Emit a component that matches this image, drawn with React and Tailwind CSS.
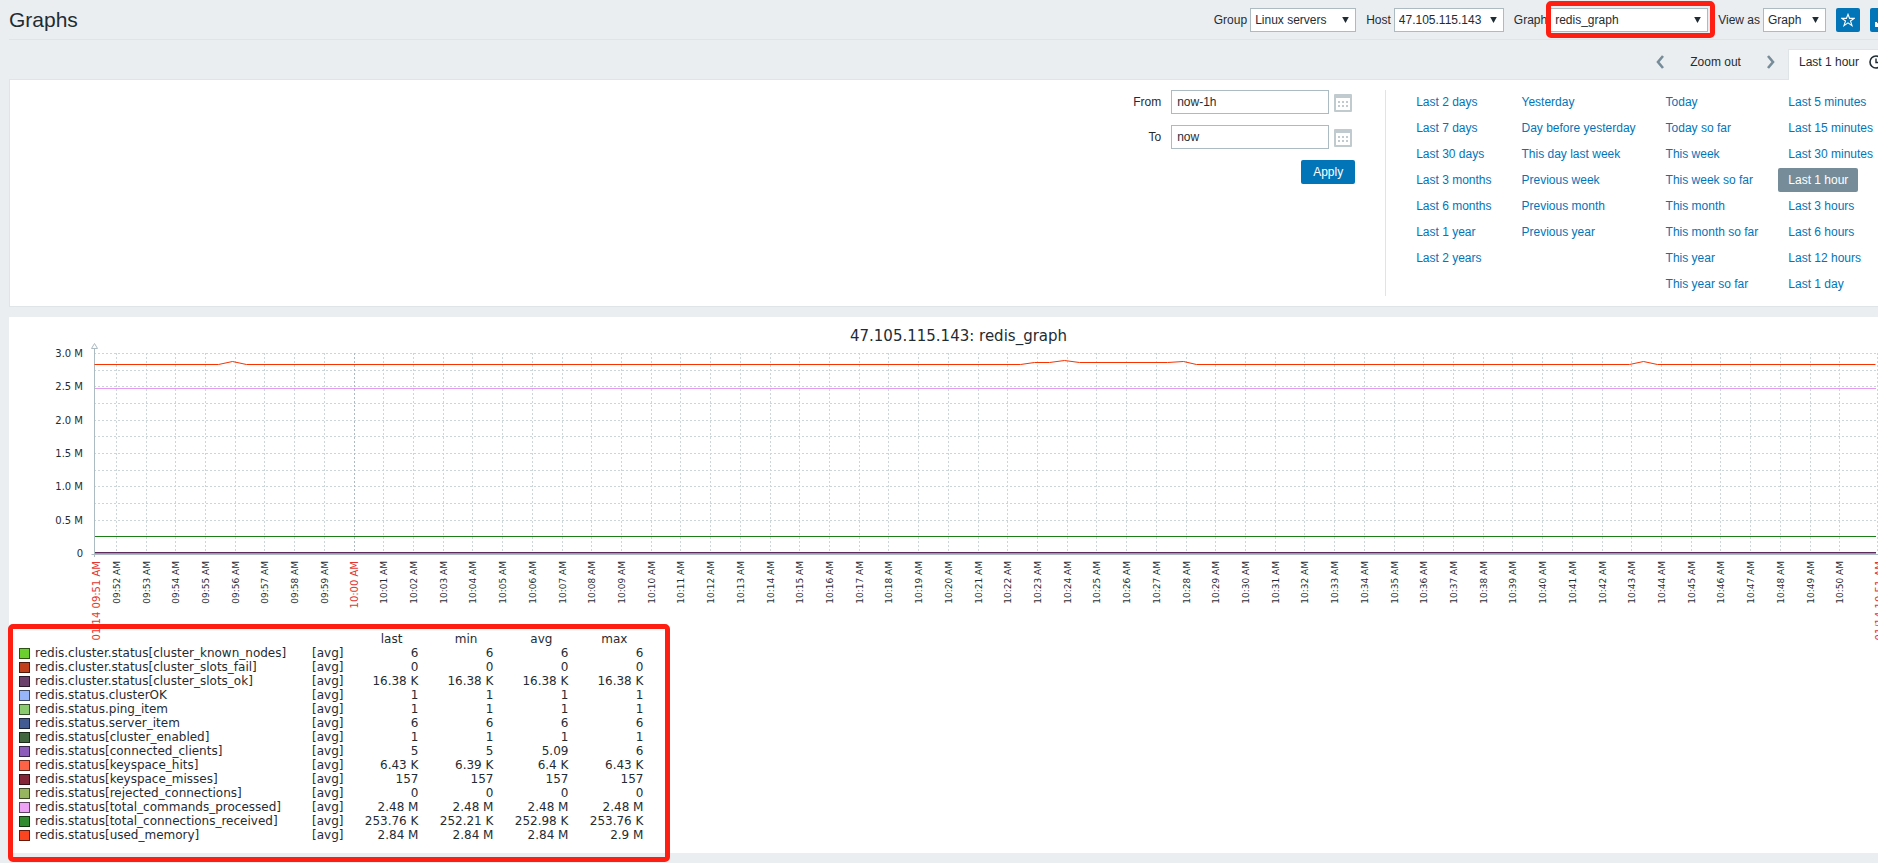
import React, { useLayoutEffect, useRef, useState } from "react";

const RANGES = [
  [
    "Last 2 days",
    "Last 7 days",
    "Last 30 days",
    "Last 3 months",
    "Last 6 months",
    "Last 1 year",
    "Last 2 years",
  ],
  [
    "Yesterday",
    "Day before yesterday",
    "This day last week",
    "Previous week",
    "Previous month",
    "Previous year",
  ],
  [
    "Today",
    "Today so far",
    "This week",
    "This week so far",
    "This month",
    "This month so far",
    "This year",
    "This year so far",
  ],
  [
    "Last 5 minutes",
    "Last 15 minutes",
    "Last 30 minutes",
    "Last 1 hour",
    "Last 3 hours",
    "Last 6 hours",
    "Last 12 hours",
    "Last 1 day",
  ],
];

const ITEMS = [
  { name: "redis.cluster.status[cluster_known_nodes]", color: "bg-[#6bd02f]", values: ["6", "6", "6", "6"] },
  { name: "redis.cluster.status[cluster_slots_fail]", color: "bg-[#c1401c]", values: ["0", "0", "0", "0"] },
  { name: "redis.cluster.status[cluster_slots_ok]", color: "bg-[#6b416b]", values: ["16.38 K", "16.38 K", "16.38 K", "16.38 K"] },
  { name: "redis.status.clusterOK", color: "bg-[#97b3fa]", values: ["1", "1", "1", "1"] },
  { name: "redis.status.ping_item", color: "bg-[#8cca70]", values: ["1", "1", "1", "1"] },
  { name: "redis.status.server_item", color: "bg-[#425b93]", values: ["6", "6", "6", "6"] },
  { name: "redis.status[cluster_enabled]", color: "bg-[#41653f]", values: ["1", "1", "1", "1"] },
  { name: "redis.status[connected_clients]", color: "bg-[#8d5cbb]", values: ["5", "5", "5.09", "6"] },
  { name: "redis.status[keyspace_hits]", color: "bg-[#fe6347]", values: ["6.43 K", "6.39 K", "6.4 K", "6.43 K"] },
  { name: "redis.status[keyspace_misses]", color: "bg-[#822638]", values: ["157", "157", "157", "157"] },
  { name: "redis.status[rejected_connections]", color: "bg-[#97b45f]", values: ["0", "0", "0", "0"] },
  { name: "redis.status[total_commands_processed]", color: "bg-[#eda2f6]", values: ["2.48 M", "2.48 M", "2.48 M", "2.48 M"] },
  { name: "redis.status[total_connections_received]", color: "bg-[#328b2e]", values: ["253.76 K", "252.21 K", "252.98 K", "253.76 K"] },
  { name: "redis.status[used_memory]", color: "bg-[#fa4520]", values: ["2.84 M", "2.84 M", "2.84 M", "2.9 M"] },
];

// [seconds from the start of the period, value in millions]
const SERIES = [
  { color: "#8fae57", points: [[0, 0], [3597, 0]] },
  { color: "#5c2a5c", points: [[0, 0.0164], [3597, 0.0164]] },
  { color: "#1a7f16", points: [[0, 0.253], [3597, 0.253]] },
  { color: "#e59bf0", points: [[0, 2.48], [3597, 2.48]] },
  {
    color: "#f93200",
    points: [
      [0, 2.84], [251, 2.84], [280, 2.88], [308, 2.84],
      [1871, 2.84], [1899, 2.865], [1929, 2.865], [1960, 2.895], [1990, 2.865],
      [2167, 2.865], [2200, 2.88], [2226, 2.84],
      [3100, 2.84], [3129, 2.88], [3157, 2.84], [3597, 2.84],
    ],
  },
];

const PERIOD = 3600;
const FIRST_MINUTE = 45; // seconds until 09:52
const PLOT = { left: 85, top: 36, height: 200, right: 17 };

const HeaderSelect = ({ id, label, options, className, marked }) => (
  <div className="flex items-center gap-[3px]">
    <label htmlFor={id} className="whitespace-nowrap">
      {label}
    </label>
    <div className="relative">
      <select
        id={id}
        className={`block h-6 appearance-none border border-[#acbbc2] bg-white pl-1 pr-5 text-xs outline-none ${className}`}
      >
        {options.map((option) => (
          <option key={option}>{option}</option>
        ))}
      </select>
      <svg
        width="7"
        height="6"
        viewBox="0 0 7 6"
        className="pointer-events-none absolute right-[7px] top-[9px]"
      >
        <path d="M0.2 0h6.600L3.500 6z" fill="#1f2c33" />
      </svg>
      {marked && (
        <div className="pointer-events-none absolute -bottom-[6px] -left-1 -right-[7px] -top-[7px] rounded-[5px] border-5 border-[#ff1f12]" />
      )}
    </div>
  </div>
);

const Chevron = ({ direction }) => (
  <svg width="8" height="14" viewBox="0 0 8 14" fill="none" stroke="#768d99" strokeWidth="2.6">
    <path d={direction === "left" ? "M7 1L2 7l5 6" : "M1 1l5 6-5 6"} />
  </svg>
);

const CalendarIcon = () => (
  <svg width="18" height="18" viewBox="0 0 18 18">
    <path
      fill="#c0cacf"
      fillRule="evenodd"
      d="M1 0h16a1 1 0 0 1 1 1v16a1 1 0 0 1-1 1H1a1 1 0 0 1-1-1V1a1 1 0 0 1 1-1zM2 4v12h14V4z"
    />
    <path fill="#c0cacf" d="M4 7h2v2H4zM8 7h2v2H8zM12 7h2v2h-2zM4 11h2v2H4zM8 11h2v2H8zM12 11h2v2h-2z" />
  </svg>
);

const DateField = ({ id, label, defaultValue }) => (
  <div className="flex items-center">
    <label htmlFor={id} className="w-10 pr-[10px] text-right">
      {label}
    </label>
    <input
      id={id}
      type="text"
      defaultValue={defaultValue}
      className="h-6 w-[158px] border border-[#acbbc2] bg-white px-[5px] outline-none"
    />
    <button type="button" aria-label={`${label} calendar`} className="ml-[5px] mr-[3px] mt-[2px] h-[18px]">
      <CalendarIcon />
    </button>
  </div>
);

const Chart = () => {
  const boxRef = useRef(null);
  const [width, setWidth] = useState(1885);

  useLayoutEffect(() => {
    const update = () => setWidth(boxRef.current.clientWidth);
    update();
    window.addEventListener("resize", update);
    return () => window.removeEventListener("resize", update);
  }, []);

  const plotWidth = width - PLOT.left - PLOT.right;
  const bottom = PLOT.top + PLOT.height;
  const x = (seconds) => PLOT.left + Math.floor((seconds / PERIOD) * plotWidth) + 0.5;
  const y = (value) => Math.round(bottom - (value / 3) * PLOT.height) + 0.5;

  const minutes = Array.from({ length: 59 }, (_, i) => {
    const clock = 9 * 60 + 52 + i;
    const hh = String(Math.floor(clock / 60)).padStart(2, "0");
    const mm = String(clock % 60).padStart(2, "0");
    return { label: `${hh}:${mm} AM`, pos: x(FIRST_MINUTE + i * 60), main: mm === "00" };
  });
  const rows = Array.from({ length: 12 }, (_, i) => (i + 1) * 0.25);

  return (
    <div ref={boxRef}>
      <svg
        width={width}
        height="315"
        className="block overflow-visible font-['DejaVu_Sans',sans-serif]"
        fill="#1f2c33"
      >
        <text x={width / 2 + 7} y="24" textAnchor="middle" fontSize="15">
          47.105.115.143: redis_graph
        </text>

        {/* grid */}
        <g stroke="#ccd5d9" strokeDasharray="2 2" shapeRendering="crispEdges">
          {rows.map((value) => (
            <line key={value} x1={PLOT.left} x2={x(PERIOD)} y1={y(value)} y2={y(value)} />
          ))}
          {minutes.map(({ label, pos, main }) => (
            <line
              key={label}
              x1={pos}
              x2={pos}
              y1={PLOT.top}
              y2={bottom}
              stroke={main ? "#acbbc2" : undefined}
            />
          ))}
          <line x1={x(PERIOD)} x2={x(PERIOD)} y1={PLOT.top} y2={bottom} />
        </g>

        {/* axes */}
        <g stroke="#acbbc2" fill="#fff">
          <path d={`M${x(0)} 31V${bottom + 4}`} />
          <path d={`M${x(0) - 3} ${bottom + 1.5}H${width}`} />
          <path d={`M${x(0) - 3} 31.5h6l-3-5z`} />
        </g>

        {SERIES.map(({ color, points }) => (
          <polyline
            key={color}
            points={points.map(([s, v]) => `${x(s)},${y(v)}`).join(" ")}
            fill="none"
            stroke={color}
            shapeRendering={points.length === 2 ? "crispEdges" : undefined}
          />
        ))}

        <g fontSize="10" textAnchor="end">
          {["0", "0.5 M", "1.0 M", "1.5 M", "2.0 M", "2.5 M", "3.0 M"].map((label, i) => (
            <text key={label} x={PLOT.left - 11} y={y(i * 0.5) + 3.5}>
              {label}
            </text>
          ))}
        </g>

        <g textAnchor="end" fontSize="9">
          {minutes.map(({ label, pos, main }) => (
            <text
              key={label}
              transform={`translate(${pos + 3.5} 244) rotate(-90)`}
              fontSize={main ? 10 : undefined}
              fill={main ? "#e33734" : undefined}
            >
              {label}
            </text>
          ))}
        </g>
        <g textAnchor="end" fontSize="10" fill="#e33734">
          <text transform={`translate(${x(0) + 5} 244) rotate(-90)`}>01/14 09:51 AM</text>
          <text transform={`translate(${x(PERIOD) + 5} 244) rotate(-90)`}>01/14 10:51 AM</text>
        </g>
      </svg>
    </div>
  );
};

const Legend = () => (
  <div className="relative w-fit pl-[10px] pr-[27px]">
    <table className="table-fixed border-collapse font-['DejaVu_Sans',sans-serif] text-xs leading-[14px]">
      <thead>
        <tr>
          <th className="w-[293px] p-0" />
          <th className="w-[31px] p-0" />
          {["last", "min", "avg", "max"].map((title) => (
            <th key={title} className="w-[75px] p-0 pr-4 text-right font-normal">
              {title}
            </th>
          ))}
        </tr>
      </thead>
      <tbody>
        {ITEMS.map(({ name, color, values }) => (
          <tr key={name}>
            <td className="p-0">
              <div className="flex items-center gap-[5px]">
                <span className={`size-[11px] border border-black/60 ${color}`} />
                {name}
              </div>
            </td>
            <td className="p-0">[avg]</td>
            {values.map((value, i) => (
              <td key={i} className="p-0 text-right">
                {value}
              </td>
            ))}
          </tr>
        ))}
      </tbody>
    </table>
    <div className="pointer-events-none absolute -bottom-5 -left-px -top-2 right-0 rounded-[5px] border-5 border-[#ff1f12]" />
  </div>
);

export default function App() {
  const [selected, setSelected] = useState("Last 1 hour");

  return (
    <div className="min-h-screen overflow-hidden bg-[#ebeef0] pb-[10px] font-['Liberation_Sans',Arial,sans-serif] text-xs text-[#1f2c33]">
      <div className="-mr-4 ml-[9px]">
        <header className="flex items-center justify-between border-b border-[#dfe4e7] pb-[7px] pt-2">
          <h1 className="text-[21px] leading-6">Graphs</h1>
          <div className="flex items-center gap-[10px]">
            <HeaderSelect id="group" label="Group" options={["Linux servers"]} className="w-[106px]" />
            <HeaderSelect id="host" label="Host" options={["47.105.115.143"]} className="w-[110px]" />
            <HeaderSelect id="graph" label="Graph" options={["redis_graph"]} className="w-[158px]" marked />
            <HeaderSelect id="view" label="View as" options={["Graph", "Values"]} className="w-[63px]" />
            <button
              type="button"
              aria-label="Add to favourites"
              className="flex size-6 items-center justify-center rounded-xs bg-[#0275b8]"
            >
              <svg width="14" height="14" viewBox="0 0 14 14" fill="none" stroke="#fff" strokeWidth="1.1">
                <path d="M7 1.300l1.600 4.100h4.600L9.500 8l1.500 4.600L7 9.900l-4 2.700L4.500 8 0.800 5.400h4.600z" />
              </svg>
            </button>
            <button
              type="button"
              aria-label="Fullscreen"
              className="flex size-6 items-center justify-center rounded-xs bg-[#0275b8]"
            >
              <svg width="14" height="14" viewBox="0 0 14 14" fill="none" stroke="#fff" strokeWidth="2">
                <path d="M1 9V13h4M1.500 12.500l4-4M9 1H13v4M12.500 1.500l-4 4" />
              </svg>
            </button>
          </div>
        </header>

        <nav className="flex items-start justify-end pt-[9px]">
          <button type="button" aria-label="Previous period" className="mt-[6px] px-[13px]">
            <Chevron direction="left" />
          </button>
          <button type="button" className="mt-[5px] px-[13px] leading-4">
            Zoom out
          </button>
          <button type="button" aria-label="Next period" className="mt-[6px] px-[13px]">
            <Chevron direction="right" />
          </button>
          <a
            href="#filter"
            className="relative -mb-px flex h-[31px] items-start gap-[10px] border-l border-t border-[#dfe4e7] bg-white pl-[10px] pr-[11px] pt-1 leading-4"
          >
            Last 1 hour
            <svg width="14" height="14" viewBox="0 0 14 14" className="mt-px" fill="none" stroke="#1f2c33">
              <circle cx="7" cy="7" r="6" strokeWidth="1.6" />
              <path d="M7 3.500V7.500h3" strokeWidth="1.400" />
            </svg>
          </a>
        </nav>

        <section
          id="filter"
          className="flex justify-end border border-[#dfe4e7] bg-white p-[10px]"
        >
          <form className="flex flex-col gap-[11px] pr-[30px]" onSubmit={(e) => e.preventDefault()}>
            <DateField id="from" label="From" defaultValue="now-1h" />
            <DateField id="to" label="To" defaultValue="now" />
            <button type="submit" className="h-6 w-[54px] self-end rounded-xs bg-[#0275b8] text-white">
              Apply
            </button>
          </form>
          <div className="flex gap-[10px] border-l border-[#dfe4e7] pl-5">
            {RANGES.map((column) => (
              <ul key={column[0]} className="flex flex-col items-start gap-[2px]">
                {column.map((range) => (
                  <li key={range}>
                    <a
                      href="#chart"
                      onClick={() => setSelected(range)}
                      className={
                        range === selected
                          ? "block whitespace-nowrap rounded-xs bg-[#768d99] px-[10px] leading-6 text-white"
                          : "block whitespace-nowrap px-[10px] leading-6 text-[#0275b8]"
                      }
                    >
                      {range}
                    </a>
                  </li>
                ))}
              </ul>
            ))}
          </div>
        </section>

        <section id="chart" className="mt-[10px] bg-white pb-[11px]">
          <Chart />
          <Legend />
        </section>
      </div>
    </div>
  );
}
